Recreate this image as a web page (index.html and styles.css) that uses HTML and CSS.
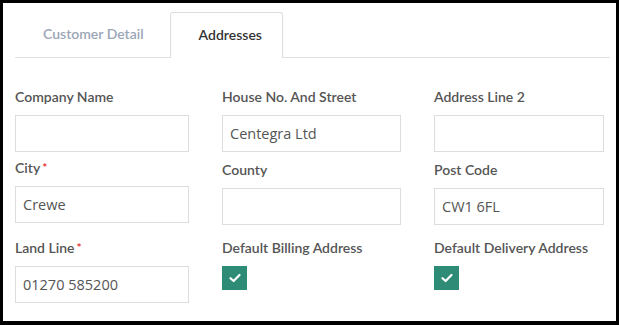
FILE: index.html
```html
<!DOCTYPE html>
<html>
<head>
  <title>Customer Addresses</title>
<link rel="stylesheet" href="styles.css">
</head>
<body>
  <div class="tabs">
    <div class="tab">Customer Detail</div>
    <div class="tab active">Addresses</div>
  </div>

  <div class="address-form">
    <div class="field">
      <label>Company Name</label>
      <input type="text" class="col-1">
    </div>
    <div class="field">
      <label>House No. And Street</label>
      <input type="text" value="Centegra Ltd">
    </div>
    <div class="field">
      <label>Address Line 2</label>
      <input type="text">
    </div>

    <div class="field field-up">
      <label>City<span class="required">*</span></label>
      <input type="text" value="Crewe">
    </div>
    <div class="field">
      <label>County</label>
      <input type="text">
    </div>
    <div class="field">
      <label>Post Code</label>
      <input type="text" value="CW1 6FL">
    </div>

    <div class="field">
      <label>Land Line<span class="required">*</span></label>
      <input type="text" value="01270 585200">
    </div>
    <div class="field">
      <label>Default Billing Address</label>
      <span class="check">
        <svg width="12" height="10" viewBox="0 0 12 10"><path d="M1.5 5.2 L4.6 8 L10.5 2" fill="none" stroke="#ffffff" stroke-width="2.2" stroke-linecap="round" stroke-linejoin="round"/></svg>
      </span>
    </div>
    <div class="field">
      <label>Default Delivery Address</label>
      <span class="check">
        <svg width="12" height="10" viewBox="0 0 12 10"><path d="M1.5 5.2 L4.6 8 L10.5 2" fill="none" stroke="#ffffff" stroke-width="2.2" stroke-linecap="round" stroke-linejoin="round"/></svg>
      </span>
    </div>
  </div>
</body>
</html>
```

FILE: styles.css
```css
* {
  margin: 0;
  padding: 0;
  box-sizing: border-box;
}

html,
body {
  height: 100%;
}

body {
  font-family: "Lato", "Open Sans", sans-serif;
  background-color: #ffffff;
  color: #555555;
  border-style: solid;
  border-color: #000000;
  border-width: 3px 3px 4px 3px;
  padding: 9px 6px 0 12px;
}

.tabs {
  display: flex;
  border-bottom: 1px solid #e0e0e0;
  height: 46px;
}

.tab {
  height: 46px;
  line-height: 44px;
  font-size: 14px;
  font-weight: 600;
  color: #9ba6b7;
  padding: 0 26px 0 28px;
}

.tab.active {
  color: #333333;
  background-color: #ffffff;
  border: 1px solid #dddddd;
  border-bottom: none;
  border-radius: 3px 3px 0 0;
  padding: 0 20px 0 28px;
}

.address-form {
  display: grid;
  grid-template-columns: 174px 179px 170px;
  column-gap: 33px;
  padding-top: 29px;
}

.field {
  display: flex;
  flex-direction: column;
  align-items: flex-start;
  margin-bottom: 8px;
}

.field:nth-child(n+4) {
  margin-bottom: 13px;
}

.field-up {
  margin-top: -2px;
}

.field label {
  font-size: 14px;
  font-weight: 600;
  line-height: 20px;
  color: #555555;
  margin-bottom: 8px;
}

.required {
  color: #e8262c;
  font-size: 12px;
  vertical-align: top;
  margin-left: 2px;
}

.field input[type="text"] {
  width: 100%;
  height: 37px;
  border: 1px solid #dddddd;
  border-radius: 0;
  padding: 0 7px;
  font-family: "Open Sans", sans-serif;
  font-size: 14.5px;
  color: #555555;
  outline: none;
}

.check {
  display: flex;
  align-items: center;
  justify-content: center;
  width: 25px;
  height: 24px;
  background-color: #2e8b76;
}
```
